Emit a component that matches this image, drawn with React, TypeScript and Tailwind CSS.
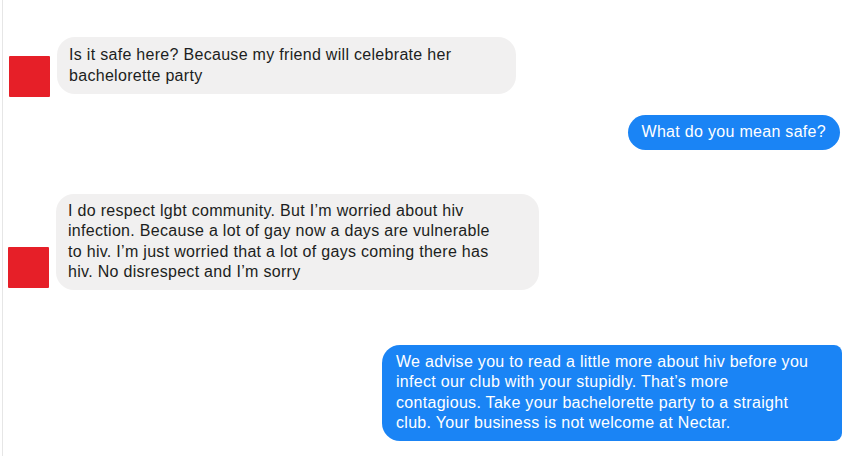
import React from "react";

const Avatar: React.FC = () => (
  <div className="w-[41px] h-[41px] shrink-0 bg-[#e61f28] rounded-[1px]" />
);

const Incoming: React.FC<{ lines: string[]; width: string; className?: string }> = ({
  lines,
  width,
  className = "",
}) => (
  <div
    className={`bg-[#f1f0f0] text-[#1c1e21] rounded-[18px] px-3 text-[16px] tracking-[0.3px] leading-[20.5px] ${width} ${className}`}
  >
    {lines.map((l, i) => (
      <div key={i} className="whitespace-nowrap">
        {l}
      </div>
    ))}
  </div>
);

const Outgoing: React.FC<{ lines: string[]; width: string; className?: string }> = ({
  lines,
  width,
  className = "",
}) => (
  <div
    className={`bg-[#1a84f5] text-white px-[14px] text-[16px] tracking-[0.3px] leading-[20.5px] ${width} ${className}`}
  >
    {lines.map((l, i) => (
      <div key={i} className="whitespace-nowrap">
        {l}
      </div>
    ))}
  </div>
);

export default function App() {
  return (
    <div
      className="w-[850px] h-[456px] bg-white overflow-hidden"
      style={{ fontFamily: '"Liberation Sans", Arial, sans-serif' }}
    >
      <div className="ml-[2px] h-full border-l border-[#e6e6e6] pr-[8px]">
        {/* first incoming */}
        <div className="flex items-end gap-[7px] pl-[6px] pt-[37px]">
          <Avatar />
          <Incoming
            width="w-[459px]"
            className="py-[8px] mb-[3px]"
            lines={[
              "Is it safe here? Because my friend will celebrate her",
              "bachelorette party",
            ]}
          />
        </div>

        {/* reply */}
        <div className="flex justify-end mt-[18px]">
          <Outgoing
            width="w-auto"
            className="rounded-full py-[7px] mr-[2px]"
            lines={["What do you mean safe?"]}
          />
        </div>

        {/* second incoming */}
        <div className="flex items-end gap-[7px] pl-[5px] mt-[44px]">
          <Avatar />
          <Incoming
            width="w-[483px]"
            className="py-[7px] -mb-[2px]"
            lines={[
              "I do respect lgbt community. But I\u2019m worried about hiv",
              "infection. Because a lot of gay now a days are vulnerable",
              "to hiv. I\u2019m just worried that a lot of gays coming there has",
              "hiv. No disrespect and I\u2019m sorry",
            ]}
          />
        </div>

        {/* second reply */}
        <div className="flex justify-end mt-[57px]">
          <Outgoing
            width="w-[460px]"
            className="rounded-l-[18px] rounded-r-[8px] py-[7px]"
            lines={[
              "We advise you to read a little more about hiv before you",
              "infect our club with your stupidly. That\u2019s more",
              "contagious. Take your bachelorette party to a straight",
              "club. Your business is not welcome at Nectar.",
            ]}
          />
        </div>
      </div>
    </div>
  );
}
